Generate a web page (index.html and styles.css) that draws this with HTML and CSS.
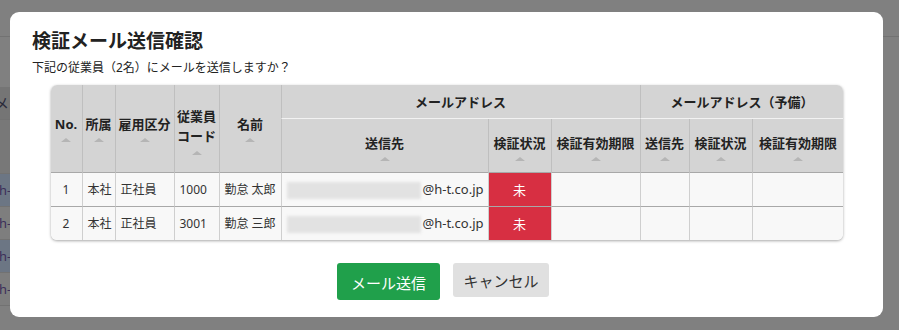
FILE: index.html
```html
<!DOCTYPE html>
<html lang="ja">
<head>
    <meta charset="UTF-8">
    <title>検証メール送信確認</title>
    <link rel="stylesheet" href="styles.css">
</head>
<body>

    <!-- page behind the dialog (dimmed) -->
    <div class="page">
        <div class="page-row top"></div>
        <div class="page-list">
            <div class="page-row gap"></div>
            <div class="page-row head"><span>メ</span></div>
            <div class="page-row sub"></div>
            <div class="page-row blue"><span>h-t.co.jp</span></div>
            <div class="page-row"><span>h-t.co.jp</span></div>
            <div class="page-row blue"><span>h-t.co.jp</span></div>
            <div class="page-row"><span>h-t.co.jp</span></div>
        </div>
    </div>

    <div class="overlay">
        <div class="modal">
            <h2 class="modal-title">検証メール送信確認</h2>
            <p class="modal-text">下記の従業員（2名）にメールを送信しますか？</p>

            <div class="table-wrap">
                <table class="mail-table">
                    <colgroup>
                        <col style="width:31px">
                        <col style="width:33px">
                        <col style="width:59px">
                        <col style="width:45px">
                        <col style="width:62px">
                        <col style="width:207px">
                        <col style="width:63px">
                        <col style="width:89px">
                        <col style="width:49px">
                        <col style="width:63px">
                        <col style="width:92px">
                    </colgroup>
                    <thead>
                        <tr>
                            <th rowspan="2">No.<i class="sort"></i></th>
                            <th rowspan="2">所属<i class="sort"></i></th>
                            <th rowspan="2">雇用区分<i class="sort"></i></th>
                            <th rowspan="2" class="wrap">従業員<br>コード<i class="sort"></i></th>
                            <th rowspan="2">名前<i class="sort"></i></th>
                            <th colspan="3" class="group">メールアドレス</th>
                            <th colspan="3" class="group">メールアドレス（予備）</th>
                        </tr>
                        <tr>
                            <th class="sub">送信先<i class="sort"></i></th>
                            <th class="sub">検証状況<i class="sort"></i></th>
                            <th class="sub">検証有効期限<i class="sort"></i></th>
                            <th class="sub">送信先<i class="sort"></i></th>
                            <th class="sub">検証状況<i class="sort"></i></th>
                            <th class="sub">検証有効期限<i class="sort"></i></th>
                        </tr>
                    </thead>
                    <tbody>
                        <tr>
                            <td class="num">1</td>
                            <td>本社</td>
                            <td>正社員</td>
                            <td>1000</td>
                            <td>勤怠 太郎</td>
                            <td class="mail"><span class="blur"></span>@h-t.co.jp</td>
                            <td class="status">未</td>
                            <td></td>
                            <td></td>
                            <td></td>
                            <td></td>
                        </tr>
                        <tr>
                            <td class="num">2</td>
                            <td>本社</td>
                            <td>正社員</td>
                            <td>3001</td>
                            <td>勤怠 三郎</td>
                            <td class="mail"><span class="blur"></span>@h-t.co.jp</td>
                            <td class="status">未</td>
                            <td></td>
                            <td></td>
                            <td></td>
                            <td></td>
                        </tr>
                    </tbody>
                </table>
            </div>

            <div class="actions">
                <button class="btn btn-send">メール送信</button>
                <button class="btn btn-cancel">キャンセル</button>
            </div>
        </div>
    </div>

</body>
</html>
```

FILE: styles.css
```css
body {
    margin: 0;
    font-family: "Noto Sans", "Noto Sans CJK JP", sans-serif;
    background-color: #808080;
    color: #333;
}
/* dimmed page behind */
.page {
    width: 100%;
    height: 330px;
    overflow: hidden;
}
.page-list {
    width: 870px;
}
.page-row {
    height: 32px;
    border-bottom: 1px solid #727272;
    background: #7e7e7e;
    font-size: 13px;
    line-height: 32px;
    color: #3c2f5a;
}
.page-row span {
    margin-left: -1px;
}
.page-row.top {
    height: 36px;
    background: #808080;
}
.page-row.gap {
    height: 50px;
    background: #808080;
    border-bottom: none;
}
.page-row.head {
    height: 32px;
    background: #757575;
    font-size: 15px;
    color: #2a2a3a;
}
.page-row.head span {
    margin-left: -6px;
}
.page-row.sub {
    height: 53px;
    background: #787878;
}
.page-row.blue {
    background: #6c7684;
}

/* dialog */
.overlay {
    position: fixed;
    left: 0;
    top: 0;
    width: 100%;
    height: 100%;
}
.modal {
    width: 873px;
    height: 305px;
    margin: 12px 0 0 10px;
    box-sizing: border-box;
    padding: 16px 22px 0 22px;
    background: #fff;
    border-radius: 9px;
}
.modal-title {
    margin: 0;
    font-size: 19px;
    line-height: 26px;
    font-weight: bold;
    color: #222;
}
.modal-text {
    margin: 5px 0 0;
    font-size: 12px;
    line-height: 18px;
    color: #222;
}
.table-wrap {
    width: 792px;
    margin: 8px auto 0;
    border-radius: 6px;
    overflow: hidden;
    box-shadow: 0 1px 3px rgba(0, 0, 0, 0.35);
}
.mail-table {
    width: 792px;
    table-layout: fixed;
    border-collapse: separate;
    border-spacing: 0;
    font-size: 12px;
}
.mail-table th {
    background: #d4d4d4;
    color: #222;
    font-size: 13px;
    font-weight: bold;
    line-height: 18px;
    padding: 0;
    text-align: center;
    vertical-align: middle;
    white-space: nowrap;
    border-left: 1px solid #bfbfbf;
}
.mail-table tr th:first-child {
    border-left: none;
}
.mail-table thead tr:nth-child(2) th:first-child {
    border-left: 1px solid #bfbfbf;
}
.mail-table th.group {
    height: 32px;
    border-bottom: 1px solid #f2f2f2;
    padding-top: 1px;
}
.mail-table th.sub {
    height: 53px;
    padding-top: 4px;
    box-sizing: border-box;
}
.mail-table th.wrap {
    line-height: 20px;
    padding-top: 4px;
}
.sort {
    display: block;
    width: 0;
    height: 0;
    margin: 5px auto 0;
    border-left: 5px solid transparent;
    border-right: 5px solid transparent;
    border-bottom: 4px solid #b5b5b5;
}
.mail-table td {
    height: 33px;
    padding: 0 5px;
    background: #f8f8f8;
    border-top: 1px solid #a8a8a8;
    border-left: 1px solid #cfcfcf;
    white-space: nowrap;
    overflow: hidden;
    line-height: 18px;
    color: #333;
}
.mail-table tr td:first-child {
    border-left: none;
}
.mail-table td.num {
    text-align: center;
}
.mail-table td.mail {
    text-align: right;
    padding-right: 4px;
    font-size: 13px;
}
.blur {
    display: inline-block;
    width: 134px;
    height: 17px;
    margin-right: 1px;
    vertical-align: middle;
    background: #e2e2e2;
    filter: blur(1.5px);
}
.mail-table td.status {
    background: #d72f42;
    color: #fff;
    text-align: center;
    font-size: 13px;
}
.actions {
    display: flex;
    justify-content: center;
    align-items: flex-start;
    gap: 13px;
    margin-top: 23px;
    padding-right: 7px;
}
.btn {
    font-family: "Noto Sans", "Noto Sans CJK JP", sans-serif;
    font-size: 15px;
    border: none;
    border-radius: 3px;
    cursor: pointer;
}
.btn-send {
    width: 103px;
    height: 37px;
    background: #20a04b;
    color: #fff;
    padding-top: 3px;
}
.btn-cancel {
    width: 96px;
    height: 34px;
    background: #e0e0e0;
    color: #333;
}
```
